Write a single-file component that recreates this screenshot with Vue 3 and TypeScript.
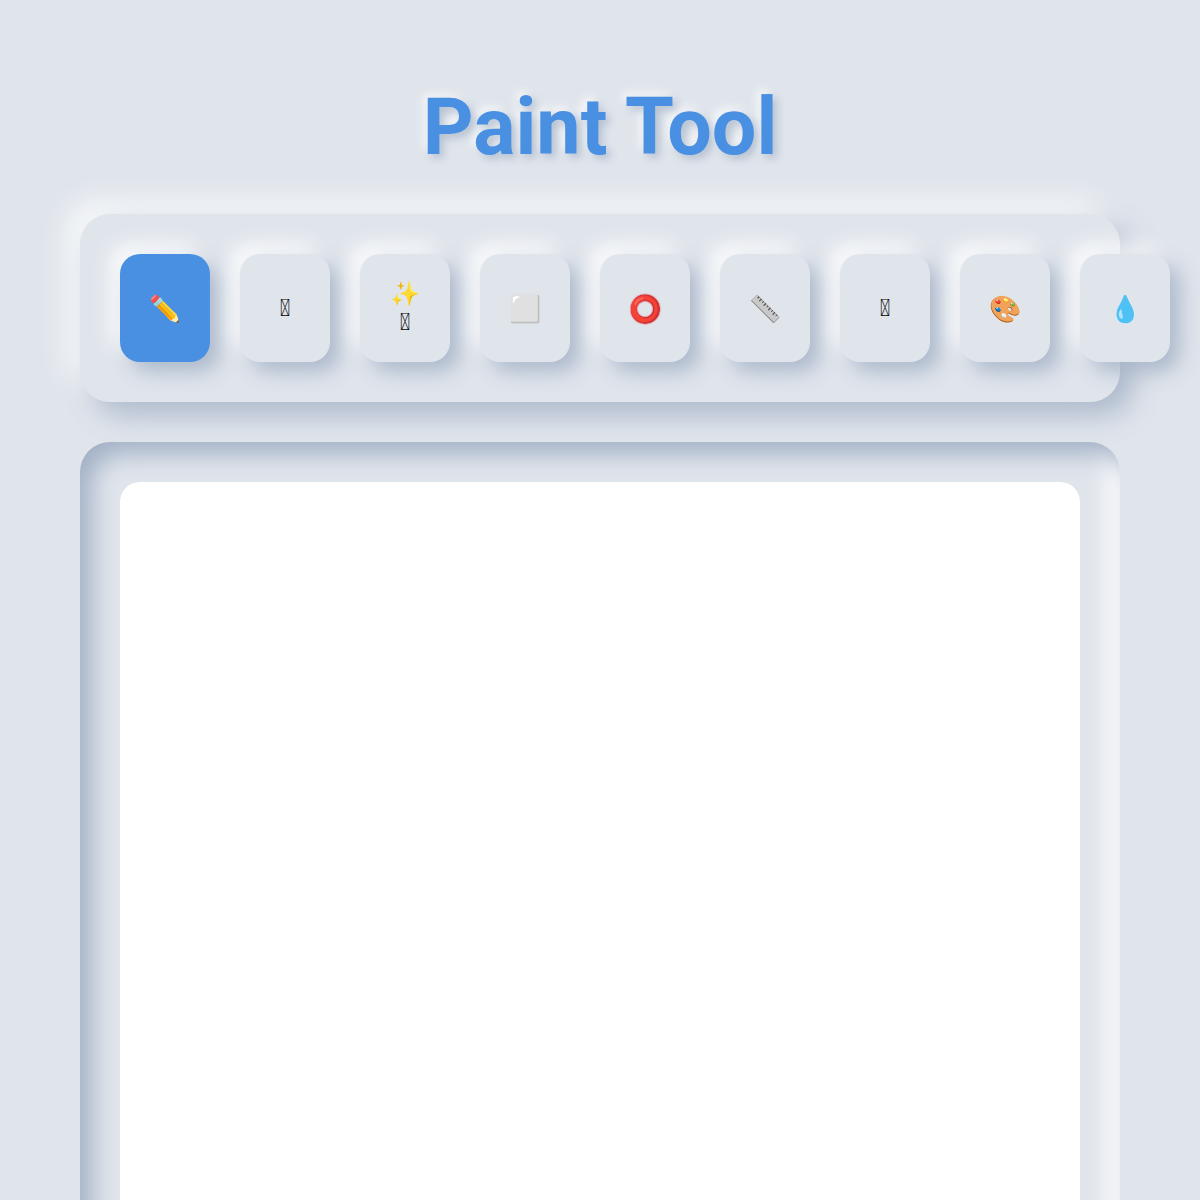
<script setup lang="ts">
interface Tool { id: string; glyph: string }
const missing = '\uE0F0'
const tools: Tool[] = [
  { id: 'pencil', glyph: '✏️' },
  { id: 'brush', glyph: missing },
  { id: 'magic', glyph: '✨\n' + missing },
  { id: 'rect', glyph: '⬜' },
  { id: 'circle', glyph: '⭕' },
  { id: 'line', glyph: '📏' },
  { id: 'fill', glyph: missing },
  { id: 'palette', glyph: '🎨' },
  { id: 'drop', glyph: '💧' },
]
const active = 'pencil'
</script>

<template>
  <main class="page">
    <h1 class="title">Paint Tool</h1>
    <div class="toolbar">
      <button
        v-for="t in tools"
        :key="t.id"
        type="button"
        class="tool"
        :class="[t.id, { active: t.id === active }]"
      ><span class="glyph">{{ t.glyph }}</span></button>
    </div>
    <div class="well">
      <div class="canvas"></div>
    </div>
  </main>
</template>

<style>
html, body { margin: 0; background: #e0e5ec; overflow: hidden; }
</style>

<style scoped>
.page {
  box-sizing: border-box;
  padding: 40px 80px;
  width: 1200px;
  display: flex;
  flex-direction: column;
  gap: 40px;
  background: #e0e5ec;
  font-family: Roboto, "Liberation Sans", sans-serif;
}
.title {
  margin: 40px 0 0;
  font-size: 79px;
  line-height: 94px;
  font-weight: 700;
  text-align: center;
  color: #4a90e2;
  text-shadow: 4px 4px 8px rgba(163, 177, 198, 0.75), -4px -4px 8px rgba(255, 255, 255, 0.75);
}
.toolbar {
  display: flex;
  gap: 30px;
  padding: 40px;
  border-radius: 30px;
  background: #e0e5ec;
  box-shadow: 13px 13px 28px rgba(163, 177, 198, 0.85), -13px -13px 28px rgba(255, 255, 255, 0.8);
}
.tool {
  flex: none;
  box-sizing: border-box;
  width: 90px;
  height: 108px;
  padding: 0 29px;
  border: 0;
  border-radius: 20px;
  background: #e0e5ec;
  font-family: Roboto, sans-serif;
  font-size: 24px;
  color: #000;
  box-shadow: 10px 10px 20px rgba(163, 177, 198, 0.85), -10px -10px 20px rgba(255, 255, 255, 0.85);
}
.tool.active { background: #4a90e2; }
.glyph { display: block; white-space: pre-line; }
.tool.pencil, .tool.rect, .tool.circle, .tool.line, .tool.palette, .tool.drop {
  font-size: 26px;
  padding-top: 2px;
}
.tool.circle .glyph { text-shadow: 0 0 2px #d8101a, 0 0 1px #d8101a; }
.tool.line .glyph { filter: grayscale(1) brightness(0.95); }
.well {
  padding: 40px;
  border-radius: 30px;
  background: #e0e5ec;
  box-shadow: inset 12px 12px 24px #a3b1c6, inset -12px -12px 24px #fff;
}
.canvas {
  height: 800px;
  border-radius: 20px;
  background: #fff;
}
</style>
